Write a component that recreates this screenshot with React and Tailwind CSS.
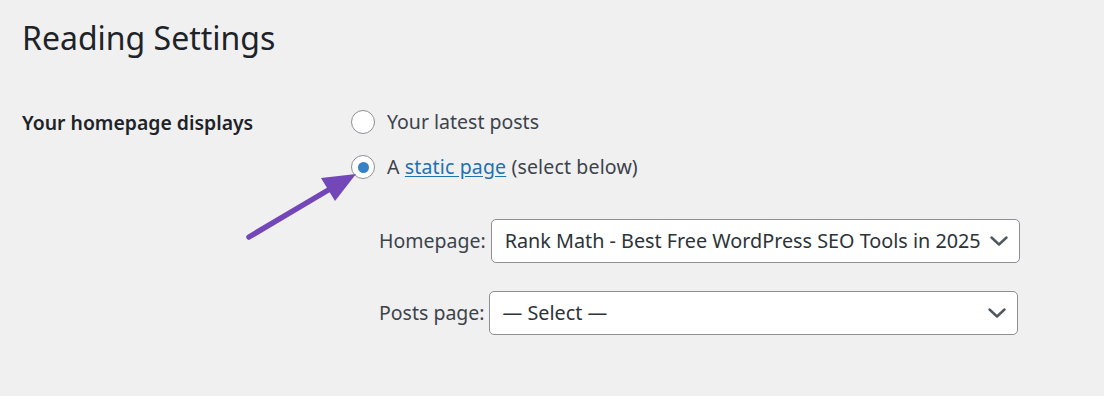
import { useState } from "react";

const font = { fontFamily: '"Noto Sans", "Open Sans", sans-serif' };

function Radio({ checked, onChange }) {
  return (
    <button
      onClick={onChange}
      className="w-6 h-6 rounded-full border border-[#8c8f94] bg-white flex items-center justify-center shrink-0"
    >
      {checked && <span className="w-[11px] h-[11px] rounded-full bg-[#3582c4]" />}
    </button>
  );
}

function Chevron() {
  return (
    <svg width="18" height="10" viewBox="0 0 18 10" className="shrink-0">
      <path d="M1.5 1.5 L9 8.5 L16.5 1.5" fill="none" stroke="#50575e" strokeWidth="2.4" strokeLinecap="round" strokeLinejoin="round" />
    </svg>
  );
}

function SelectBox({ value }) {
  return (
    <div className="h-[44px] w-[529px] bg-white border border-[#8c8f94] rounded-[5px] flex items-center justify-between pl-[13px] pr-[11px] text-[19.8px] text-[#2c3338]">
      <span className="whitespace-nowrap">{value}</span>
      <Chevron />
    </div>
  );
}

export default function App() {
  const [mode, setMode] = useState("page");

  return (
    <div className="w-[1104px] h-[396px] bg-[#f0f0f1] text-[#1d2327] relative overflow-hidden" style={font}>
      <div className="pl-[22px] pt-[16px]">
        <h1 className="text-[32px] leading-[44px] font-normal">Reading Settings</h1>

        <div className="grid grid-cols-[329px_1fr] mt-[49px]">
          <div className="text-[19.4px] font-semibold leading-[26px] pt-[1px]">Your homepage displays</div>
          <div className="flex flex-col">
            <label className="flex items-center gap-[12px] h-[26px] text-[19.5px] text-[#3c434a]">
              <Radio checked={mode === "posts"} onChange={() => setMode("posts")} />
              <span>Your latest posts</span>
            </label>
            <label className="flex items-center gap-[12px] h-[26px] mt-[19px] text-[19.5px] text-[#3c434a]">
              <Radio checked={mode === "page"} onChange={() => setMode("page")} />
              <span className="tracking-[0.15px]">
                A <a href="#" className="text-[#2271b1] underline underline-offset-2">static page</a> (select below)
              </span>
            </label>

            <div className="pl-[28px] mt-[39px] flex flex-col gap-[28px] text-[19.5px] text-[#3c434a]">
              <div className="flex items-center gap-[5px]">
                <span>Homepage:</span>
                <SelectBox value="Rank Math - Best Free WordPress SEO Tools in 2025" />
              </div>
              <div className="flex items-center gap-[4px]">
                <span>Posts page:</span>
                <SelectBox value="— Select —" />
              </div>
            </div>
          </div>
        </div>
      </div>

      <svg className="absolute left-0 top-0 pointer-events-none" width="1104" height="396">
        <line x1="249" y1="237" x2="330" y2="189" stroke="#7447b8" strokeWidth="5.5" strokeLinecap="round" />
        <polygon points="321,178 356,174 335,201" fill="#7447b8" />
      </svg>
    </div>
  );
}
